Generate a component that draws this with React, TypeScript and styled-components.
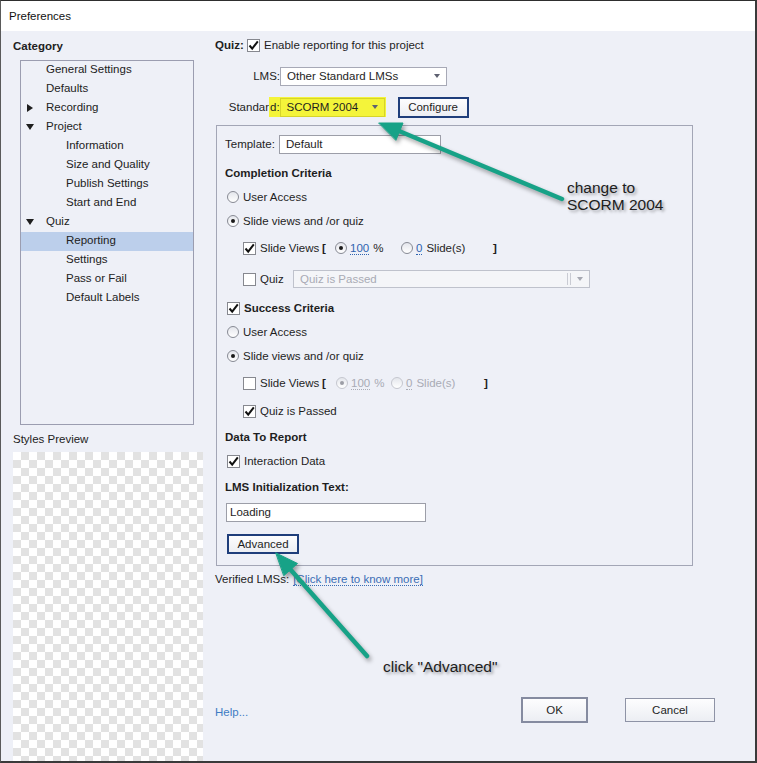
import React from "react";
import styled, { createGlobalStyle } from "styled-components";

const GlobalStyle = createGlobalStyle`
  html, body {
    margin: 0;
    padding: 0;
    background: #fff;
  }
  body {
    font-family: "Liberation Sans", Arial, sans-serif;
  }
`;

const Window = styled.div`
  position: relative;
  width: 757px;
  height: 763px;
  box-sizing: border-box;
  border-top: 1px solid #2e2e2e;
  border-left: 1px solid #5a5a5a;
  border-right: 2px solid #3a3a3a;
  border-bottom: 2px solid #3a3a3a;
  display: flex;
  flex-direction: column;
  font-family: "Liberation Sans", Arial, sans-serif;
  font-size: 11.5px;
  color: #1e1e1e;
  overflow: hidden;
`;

const TitleBar = styled.div`
  height: 30px;
  flex: none;
  background: #fff;
  display: flex;
  align-items: center;
  padding-left: 8px;
  color: #111;
`;

const Body = styled.div`
  flex: 1;
  display: flex;
  background: #eef0f7;
  min-height: 0;
`;

const Sidebar = styled.div`
  width: 201px;
  flex: none;
  box-sizing: border-box;
  padding: 8px 0 0 12px;
  display: flex;
  flex-direction: column;
`;

const Heading = styled.div<{ $bold?: boolean; $mt?: number }>`
  line-height: 14px;
  margin-top: ${p => p.$mt ?? 0}px;
  font-weight: ${p => (p.$bold ? 700 : 400)};
  color: #222;
`;

const Tree = styled.div`
  margin: 7px 0 0 7px;
  width: 174px;
  height: 365px;
  box-sizing: border-box;
  border: 1px solid #9b9db0;
`;

const TreeItem = styled.div<{ $indent: number; $selected?: boolean }>`
  height: 19px;
  line-height: 17px;
  display: flex;
  padding-left: ${p => p.$indent}px;
  background: ${p => (p.$selected ? "#bccfeb" : "transparent")};
  color: #222;
`;

const CaretSlot = styled.span`
  width: 20px;
  height: 17px;
  flex: none;
  display: flex;
  align-items: center;
`;

const Caret = styled.span<{ $open?: boolean }>`
  width: 0;
  height: 0;
  ${p =>
    p.$open
      ? `border-left: 4px solid transparent; border-right: 4px solid transparent; border-top: 6px solid #1e1e1e; margin-top: 1px;`
      : `border-top: 4px solid transparent; border-bottom: 4px solid transparent; border-left: 6px solid #1e1e1e; margin-left: 1px;`}
`;

const Checker = styled.div`
  margin-top: 6px;
  width: 190px;
  flex: 1;
  background-color: #fff;
  background-image: linear-gradient(45deg, #e2e2e2 25%, transparent 25%, transparent 75%, #e2e2e2 75%),
    linear-gradient(45deg, #e2e2e2 25%, transparent 25%, transparent 75%, #e2e2e2 75%);
  background-size: 16px 16px;
  background-position: 0 0, 8px 8px;
`;

const Main = styled.div`
  flex: 1;
  display: flex;
  flex-direction: column;
  padding: 4px 40px 38px 13px;
`;

const Line = styled.div<{ $h?: number; $mt?: number; $indent?: number }>`
  display: flex;
  align-items: center;
  height: ${p => p.$h ?? 24}px;
  margin-top: ${p => p.$mt ?? 0}px;
  padding-left: ${p => p.$indent ?? 0}px;
  white-space: nowrap;
`;

const Slot = styled.span<{ $w: number; $right?: boolean; $bold?: boolean }>`
  width: ${p => p.$w}px;
  flex: none;
  display: flex;
  align-items: center;
  justify-content: ${p => (p.$right ? "flex-end" : "flex-start")};
  font-weight: ${p => (p.$bold ? 700 : 400)};
`;

const Text = styled.span<{ $gap?: number; $bold?: boolean; $muted?: boolean }>`
  margin-left: ${p => p.$gap ?? 0}px;
  font-weight: ${p => (p.$bold ? 700 : 400)};
  color: ${p => (p.$muted ? "#a9abb5" : "inherit")};
`;

const Num = styled.span<{ $muted?: boolean }>`
  color: ${p => (p.$muted ? "#a9abb5" : "#2f64b0")};
  border-bottom: 1px dotted ${p => (p.$muted ? "#a9abb5" : "#2f64b0")};
  line-height: 12px;
`;

const Mark = styled.span`
  display: flex;
  align-items: center;
  height: 20px;
  background: #f4f43a;
  padding: 0 1px 0 1px;
`;

const Select = styled.div<{ $w: number; $h?: number; $tone?: "plain" | "marked" | "disabled" }>`
  display: flex;
  align-items: center;
  box-sizing: border-box;
  width: ${p => p.$w}px;
  height: ${p => p.$h ?? 19}px;
  padding-left: 6px;
  border: 1px solid
    ${p => (p.$tone === "marked" ? "#d6d42a" : p.$tone === "disabled" ? "#bfc2cc" : "#a7a9b6")};
  background: ${p => (p.$tone === "marked" ? "#f4f43a" : p.$tone === "disabled" ? "#f4f5f8" : "#fff")};
  color: ${p => (p.$tone === "disabled" ? "#a9abb5" : "#1e1e1e")};
`;

const Divider = styled.span`
  margin-left: auto;
  width: 2px;
  height: 12px;
  border-left: 1px solid #c9cbd3;
  border-right: 1px solid #c9cbd3;
`;

const DropArrow = styled.span<{ $muted?: boolean; $auto?: boolean }>`
  margin-left: ${p => (p.$auto ? "auto" : "6px")};
  margin-right: 6px;
  width: 0;
  height: 0;
  border-left: 3.5px solid transparent;
  border-right: 3.5px solid transparent;
  border-top: 4px solid ${p => (p.$muted ? "#a6a8b2" : "#5d6070")};
`;

const TextBox = styled.div<{ $w: number; $pad: number }>`
  display: flex;
  align-items: center;
  box-sizing: border-box;
  width: ${p => p.$w}px;
  height: 19px;
  padding-left: ${p => p.$pad}px;
  border: 1px solid #9c9ea8;
  background: #fff;
  color: #1e1e1e;
`;

const Button = styled.button<{ $w: number; $h: number; $look: "focus" | "default" | "plain"; $ml?: number }>`
  width: ${p => p.$w}px;
  height: ${p => p.$h}px;
  box-sizing: border-box;
  margin: 0 0 0 ${p => p.$ml ?? 0}px;
  padding: 0;
  font: inherit;
  color: #1e1e1e;
  background: linear-gradient(#fdfdfe, #eceef3);
  border: ${p =>
    p.$look === "focus" ? "2px solid #1f3e7b" : p.$look === "default" ? "2px solid #858ba0" : "1px solid #8e93a6"};
  flex: none;
`;

const Radio = styled.span<{ $checked?: boolean; $disabled?: boolean }>`
  width: 12px;
  height: 12px;
  flex: none;
  box-sizing: border-box;
  border-radius: 50%;
  border: 1px solid ${p => (p.$disabled ? "#c5c7cf" : "#878a94")};
  background: linear-gradient(#e4e6ec, #fff);
  display: inline-flex;
  align-items: center;
  justify-content: center;
  &::after {
    content: "";
    display: ${p => (p.$checked ? "block" : "none")};
    width: 4px;
    height: 4px;
    border-radius: 50%;
    background: ${p => (p.$disabled ? "#9c9ea6" : "#1a1a1a")};
  }
`;

const Box = styled.span`
  width: 13px;
  height: 13px;
  flex: none;
  box-sizing: border-box;
  border: 1px solid #86888f;
  background: #fff;
  display: inline-flex;
`;

const GroupBox = styled.div`
  margin: 7px 0 0 1px;
  width: 477px;
  box-sizing: border-box;
  border: 1px solid #a3a6b6;
  padding: 6px 0 9px 0;
`;

const Link = styled.span`
  color: #3a6db5;
  border-bottom: 1px dotted #3a6db5;
  line-height: 13px;
`;

const Footer = styled.div`
  margin-top: auto;
  height: 26px;
  display: flex;
  align-items: center;
`;

const Help = styled.span`
  color: #3f7cc4;
  margin-top: 4px;
`;

const Buttons = styled.div`
  margin-left: auto;
  display: flex;
  align-items: center;
  gap: 37px;
`;

const Overlay = styled.svg`
  position: absolute;
  left: -1px;
  top: -1px;
  pointer-events: none;
  filter: drop-shadow(2px 3px 2px rgba(0, 0, 0, 0.35));
`;

const Note = styled.div<{ $x: number; $y: number }>`
  position: absolute;
  left: ${p => p.$x}px;
  top: ${p => p.$y}px;
  font-size: 15.5px;
  line-height: 17px;
  color: #202020;
  text-shadow: 2px 2px 3px rgba(0, 0, 0, 0.35);
  white-space: nowrap;
`;

const Check: React.FC<{ checked?: boolean }> = ({ checked }) => (
  <Box>
    {checked && (
      <svg width="11" height="11" viewBox="0 0 11 11">
        <polyline points="1.5,5.5 4.2,8.6 9.8,1.4" fill="none" stroke="#111" strokeWidth="2" />
      </svg>
    )}
  </Box>
);

const tree = [
  { label: "General Settings", indent: 5 },
  { label: "Defaults", indent: 5 },
  { label: "Recording", indent: 5, caret: "closed" },
  { label: "Project", indent: 5, caret: "open" },
  { label: "Information", indent: 25 },
  { label: "Size and Quality", indent: 25 },
  { label: "Publish Settings", indent: 25 },
  { label: "Start and End", indent: 25 },
  { label: "Quiz", indent: 5, caret: "open" },
  { label: "Reporting", indent: 25, selected: true },
  { label: "Settings", indent: 25 },
  { label: "Pass or Fail", indent: 25 },
  { label: "Default Labels", indent: 25 },
];

interface SlideViewsProps {
  checked?: boolean;
  muted?: boolean;
  widths: [number, number, number, number];
  mt: number;
}

// Slide Views [ (o) 100 %  ( ) 0 Slide(s) ]
const SlideViews: React.FC<SlideViewsProps> = ({ checked, muted, widths, mt }) => (
  <Line $indent={26} $mt={mt}>
    <Check checked={checked} />
    <Slot $w={widths[0]}>
      <Text $gap={4}>Slide Views</Text>
    </Slot>
    <Slot $w={widths[1]} $bold>[</Slot>
    <Slot $w={widths[2]}>
      <Radio $checked $disabled={muted} />
      <Text $gap={3}>
        <Num $muted={muted}>100</Num>
      </Text>
      <Text $gap={4} $muted={muted}>%</Text>
    </Slot>
    <Slot $w={widths[3]}>
      <Radio $disabled={muted} />
      <Text $gap={3}>
        <Num $muted={muted}>0</Num>
      </Text>
      <Text $gap={4} $muted={muted}>Slide(s)</Text>
    </Slot>
    <Text $bold>]</Text>
  </Line>
);

export default function App() {
  return (
    <Window>
      <GlobalStyle />
      <TitleBar>Preferences</TitleBar>
      <Body>
        <Sidebar>
          <Heading $bold>Category</Heading>
          <Tree>
            {tree.map(item => (
              <TreeItem key={item.label} $indent={item.indent} $selected={item.selected}>
                <CaretSlot>{item.caret && <Caret $open={item.caret === "open"} />}</CaretSlot>
                {item.label}
              </TreeItem>
            ))}
          </Tree>
          <Heading $mt={7}>Styles Preview</Heading>
          <Checker />
        </Sidebar>

        <Main>
          <Line $h={20}>
            <Slot $w={32} $bold>Quiz:</Slot>
            <Check checked />
            <Text $gap={4}>Enable reporting for this project</Text>
          </Line>

          <Line $h={22} $mt={10}>
            <Slot $w={65} $right>
              <Text>LMS:</Text>
            </Slot>
            <Select $w={167}>
              Other Standard LMSs
              <DropArrow $auto />
            </Select>
          </Line>

          <Line $h={22} $mt={9}>
            <Slot $w={54} $right>Standar</Slot>
            <Mark>
              d:
              <Select $w={105} $h={19} $tone="marked">
                SCORM 2004
                <DropArrow $auto />
              </Select>
            </Mark>
            <Button $w={71} $h={21} $look="focus" $ml={12}>
              Configure
            </Button>
          </Line>

          <GroupBox>
            <Line $indent={8}>
              <Slot $w={54}>Template:</Slot>
              <TextBox $w={162} $pad={6}>Default</TextBox>
            </Line>
            <Line $indent={8} $mt={5}>
              <Text $bold>Completion Criteria</Text>
            </Line>
            <Line $indent={10}>
              <Radio />
              <Text $gap={4}>User Access</Text>
            </Line>
            <Line $indent={10}>
              <Radio $checked />
              <Text $gap={4}>Slide views and /or quiz</Text>
            </Line>
            <SlideViews mt={3} checked widths={[66, 13, 66, 92]} />
            <Line $indent={26} $mt={7}>
              <Check />
              <Slot $w={37}>
                <Text $gap={4}>Quiz</Text>
              </Slot>
              <Select $w={297} $h={18} $tone="disabled">
                Quiz is Passed
                <Divider />
                <DropArrow $muted />
              </Select>
            </Line>
            <Line $indent={10} $mt={5}>
              <Check checked />
              <Text $gap={4} $bold>Success Criteria</Text>
            </Line>
            <Line $indent={10}>
              <Radio />
              <Text $gap={4}>User Access</Text>
            </Line>
            <Line $indent={10}>
              <Radio $checked />
              <Text $gap={4}>Slide views and /or quiz</Text>
            </Line>
            <SlideViews mt={3} muted widths={[66, 14, 55, 93]} />
            <Line $indent={26} $mt={4}>
              <Check checked />
              <Text $gap={4}>Quiz is Passed</Text>
            </Line>
            <Line $indent={8} $mt={2}>
              <Text $bold>Data To Report</Text>
            </Line>
            <Line $indent={10}>
              <Check checked />
              <Text $gap={4}>Interaction Data</Text>
            </Line>
            <Line $indent={8} $mt={2}>
              <Text $bold>LMS Initialization Text:</Text>
            </Line>
            <Line $indent={9} $mt={1}>
              <TextBox $w={200} $pad={3}>Loading</TextBox>
            </Line>
            <Line $indent={10} $mt={8}>
              <Button $w={72} $h={20} $look="focus">
                Advanced
              </Button>
            </Line>
          </GroupBox>

          <Line $h={18} $mt={4}>
            <Text>Verified LMSs:</Text>
            <Text $gap={4}>
              <Link>[Click here to know more]</Link>
            </Text>
          </Line>

          <Footer>
            <Help>Help...</Help>
            <Buttons>
              <Button $w={67} $h={26} $look="default">
                OK
              </Button>
              <Button $w={90} $h={24} $look="plain">
                Cancel
              </Button>
            </Buttons>
          </Footer>
        </Main>
      </Body>

      <Overlay width="757" height="763" viewBox="0 0 757 763">
        <g fill="#17a287" stroke="#17a287" strokeLinecap="round">
          <line x1="562" y1="199" x2="399" y2="131" strokeWidth="4.5" />
          <polygon points="379,123 403,123 396,140" strokeWidth="1" />
          <line x1="367" y1="656" x2="290" y2="569" strokeWidth="4.5" />
          <polygon points="276,553 297.5,563.5 284,575.5" strokeWidth="1" />
        </g>
      </Overlay>
      <Note $x={566} $y={178}>
        change to
        <br />
        SCORM 2004
      </Note>
      <Note $x={382} $y={657}>click "Advanced"</Note>
    </Window>
  );
}
